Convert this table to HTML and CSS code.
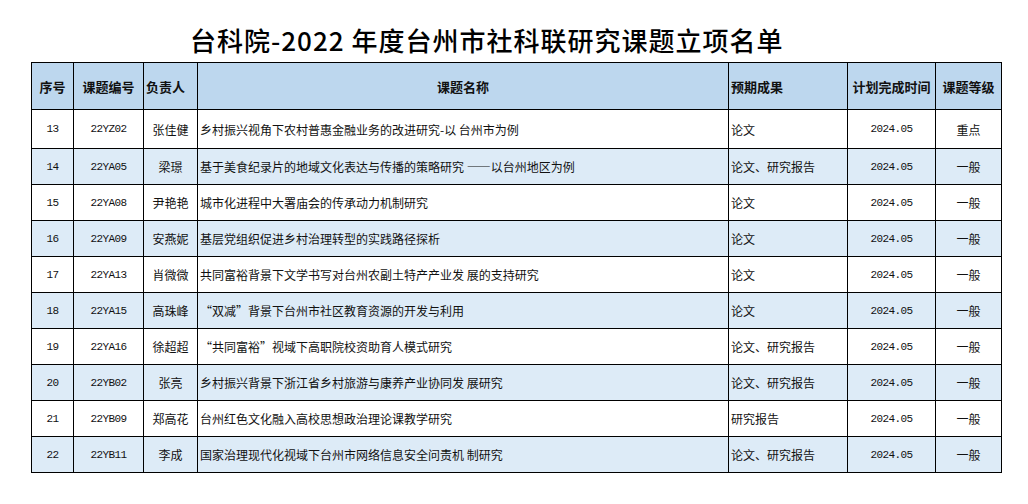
FILE: index.html
```html
<!DOCTYPE html>
<html lang="zh-CN">
<head>
<meta charset="utf-8">
<title>台科院-2022 年度台州市社科联研究课题立项名单</title>
<link rel="stylesheet" href="styles.css">
</head>
<body>
<h1 class="title">台科院-2022 年度台州市社科联研究课题立项名单</h1>
<table class="list">
  <colgroup>
    <col class="c-no"><col class="c-code"><col class="c-person"><col class="c-name"><col class="c-result"><col class="c-time"><col class="c-level">
  </colgroup>
  <thead>
    <tr class="head">
      <th class="ctr">序号</th>
      <th class="ctr">课题编号</th>
      <th class="lft">负责人</th>
      <th class="ctr">课题名称</th>
      <th class="lft">预期成果</th>
      <th class="ctr">计划完成时间</th>
      <th class="ctr">课题等级</th>
    </tr>
  </thead>
  <tbody>
    <tr class="first"><td class="mono">13</td><td class="mono">22YZ02</td><td class="ctr">张佳健</td><td class="lft">乡村振兴视角下农村普惠金融业务的改进研究-以 台州市为例</td><td class="lft">论文</td><td class="mono">2024.05</td><td class="ctr">重点</td></tr>
    <tr class="alt"><td class="mono">14</td><td class="mono">22YA05</td><td class="ctr">梁璟</td><td class="lft">基于美食纪录片的地域文化表达与传播的策略研究 ——以台州地区为例</td><td class="lft">论文、研究报告</td><td class="mono">2024.05</td><td class="ctr">一般</td></tr>
    <tr><td class="mono">15</td><td class="mono">22YA08</td><td class="ctr">尹艳艳</td><td class="lft">城市化进程中大署庙会的传承动力机制研究</td><td class="lft">论文</td><td class="mono">2024.05</td><td class="ctr">一般</td></tr>
    <tr class="alt"><td class="mono">16</td><td class="mono">22YA09</td><td class="ctr">安燕妮</td><td class="lft">基层党组织促进乡村治理转型的实践路径探析</td><td class="lft">论文</td><td class="mono">2024.05</td><td class="ctr">一般</td></tr>
    <tr><td class="mono">17</td><td class="mono">22YA13</td><td class="ctr">肖微微</td><td class="lft">共同富裕背景下文学书写对台州农副土特产产业发 展的支持研究</td><td class="lft">论文</td><td class="mono">2024.05</td><td class="ctr">一般</td></tr>
    <tr class="alt"><td class="mono">18</td><td class="mono">22YA15</td><td class="ctr">高珠峰</td><td class="lft">“双减”背景下台州市社区教育资源的开发与利用</td><td class="lft">论文</td><td class="mono">2024.05</td><td class="ctr">一般</td></tr>
    <tr><td class="mono">19</td><td class="mono">22YA16</td><td class="ctr">徐超超</td><td class="lft">“共同富裕”视域下高职院校资助育人模式研究</td><td class="lft">论文、研究报告</td><td class="mono">2024.05</td><td class="ctr">一般</td></tr>
    <tr class="alt"><td class="mono">20</td><td class="mono">22YB02</td><td class="ctr">张亮</td><td class="lft">乡村振兴背景下浙江省乡村旅游与康养产业协同发 展研究</td><td class="lft">论文、研究报告</td><td class="mono">2024.05</td><td class="ctr">一般</td></tr>
    <tr><td class="mono">21</td><td class="mono">22YB09</td><td class="ctr">郑高花</td><td class="lft">台州红色文化融入高校思想政治理论课教学研究</td><td class="lft">研究报告</td><td class="mono">2024.05</td><td class="ctr">一般</td></tr>
    <tr class="alt"><td class="mono">22</td><td class="mono">22YB11</td><td class="ctr">李成</td><td class="lft">国家治理现代化视域下台州市网络信息安全问责机 制研究</td><td class="lft">论文、研究报告</td><td class="mono">2024.05</td><td class="ctr">一般</td></tr>
  </tbody>
</table>
</body>
</html>
```

FILE: styles.css
```css
html, body {
  margin: 0;
  padding: 0;
  background: #ffffff;
}
body {
  padding: 8px;
  font-family: "Noto Sans CJK SC", "Noto Sans", sans-serif;
  color: #111;
}
.title {
  margin: 0;
  padding: 16px 0 0 182px;
  height: 54px;
  box-sizing: border-box;
  font-size: 26px;
  line-height: 32px;
  font-weight: 500;
  color: #000;
  white-space: nowrap;
  letter-spacing: 1px;
}
.list {
  margin-left: 23px;
  width: 970px;
  table-layout: fixed;
  border-collapse: collapse;
  border: 1.5px solid #000;
}
.c-no { width: 42px; }
.c-code { width: 70px; }
.c-person { width: 54px; }
.c-name { width: 531px; }
.c-result { width: 119px; }
.c-time { width: 88px; }
.c-level { width: 66px; }

.list th, .list td {
  border: 1px solid #000;
  padding: 0 2px;
  white-space: nowrap;
  overflow: hidden;
  vertical-align: middle;
}
.head {
  height: 47px;
  background: #bdd7ee;
}
.head th {
  font-size: 13px;
  font-weight: 700;
  color: #111;
}
.list tbody tr { height: 36px; }
.list tbody tr.first { height: 39px; }
.list tbody tr.alt { background: #ddebf7; }
.list td {
  font-size: 12px;
  color: #111;
}
.ctr { text-align: center; }
.lft { text-align: left; }
.list td.mono {
  text-align: center;
  font-family: "Liberation Mono", "DejaVu Sans Mono", monospace;
  font-size: 11px;
  letter-spacing: -0.6px;
}
```
